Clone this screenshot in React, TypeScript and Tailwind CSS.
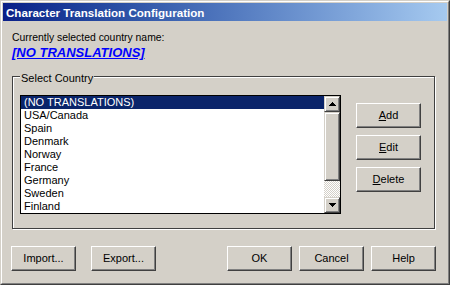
import React from "react";

const raisedBtn =
  "flex items-center justify-center bg-[#d4d0c8] border border-t-white border-l-white border-r-[#404040] border-b-[#404040] shadow-[inset_-1px_-1px_0_#808080] text-[11px] leading-[13px] text-black";

const sbBtn =
  "flex items-center justify-center w-[16px] h-[16px] bg-[#d4d0c8] border border-t-[#d4d0c8] border-l-[#d4d0c8] border-r-[#404040] border-b-[#404040] shadow-[inset_1px_1px_0_#fff,inset_-1px_-1px_0_#808080]";

function Btn({ children, className = "" }: { children: React.ReactNode; className?: string }) {
  return <div className={`${raisedBtn} w-[65px] h-[25px] ${className}`}>{children}</div>;
}

const items = [
  "(NO TRANSLATIONS)",
  "USA/Canada",
  "Spain",
  "Denmark",
  "Norway",
  "France",
  "Germany",
  "Sweden",
  "Finland",
];

export default function App() {
  return (
    <div className="w-[450px] h-[285px] bg-[#d4d0c8] border border-t-[#d4d0c8] border-l-[#d4d0c8] border-r-[#404040] border-b-[#404040] font-['Liberation_Sans',Arial,sans-serif] text-black select-none">
      <div className="w-full h-full border border-t-white border-l-white border-r-[#808080] border-b-[#808080] p-[1px] flex flex-col">
        {/* Title bar */}
        <div className="h-[18px] flex items-center pl-[3px] bg-gradient-to-r from-[#0b1f88] to-[#a6caf0]">
          <span className="text-white font-bold text-[11.6px] leading-[13px]">Character Translation Configuration</span>
        </div>
        {/* Body */}
        <div className="flex flex-col pl-[9px]">
          <div className="mt-[10px] h-[13px] leading-[13px] text-[10.4px]">Currently selected country name:</div>
          <div className="mt-[2px] h-[14px] leading-[14px] text-[13px] font-bold italic underline text-[#0000ff]">
            [NO TRANSLATIONS]
          </div>
          {/* Group box */}
          <div className="relative mt-[16px] w-[423px] h-[153px] border border-[#404040] shadow-[inset_1px_1px_0_#fff,1px_1px_0_#fff]">
            <div className="absolute left-[7px] top-[-5px] px-[1px] bg-[#d4d0c8] text-[11px] leading-[13px]">Select Country</div>
            <div className="flex pl-[7px] pt-[18px]">
              {/* Listbox */}
              <div className="w-[321px] h-[119px] border border-black bg-white flex overflow-hidden">
                <div className="flex-1 flex flex-col">
                  {items.map((it, i) => (
                    <div
                      key={it}
                      className={`h-[13px] shrink-0 leading-[13px] text-[11px] pl-[3px] ${
                        i === 0 ? "bg-[#0a246a] text-white" : "text-black"
                      }`}
                    >
                      {it}
                    </div>
                  ))}
                </div>
                {/* Scrollbar */}
                <div className="w-[16px] flex flex-col">
                  <div className={sbBtn}>
                    <svg width="7" height="4" viewBox="0 0 7 4">
                      <path d="M3 0h1v1h1v1h1v1h1v1H0V3h1V2h1V1h1z" fill="#000" />
                    </svg>
                  </div>
                  <div className="w-[16px] h-[69px] bg-[#d4d0c8] border border-t-[#d4d0c8] border-l-[#d4d0c8] border-r-[#404040] border-b-[#404040] shadow-[inset_1px_1px_0_#fff,inset_-1px_-1px_0_#808080]" />
                  <div className="w-[16px] h-[16px] bg-[repeating-conic-gradient(#d4d0c8_0_25%,#ffffff_0_50%)] bg-[length:2px_2px]" />
                  <div className={sbBtn}>
                    <svg width="7" height="4" viewBox="0 0 7 4">
                      <path d="M0 0h7v1H6v1H5v1H4v1H3V3H2V2H1V1H0z" fill="#000" />
                    </svg>
                  </div>
                </div>
              </div>
              {/* Side buttons */}
              <div className="flex flex-col gap-[7px] ml-[15px] mt-[8px]">
                <Btn>
                  <span>
                    <u>A</u>dd
                  </span>
                </Btn>
                <Btn>
                  <span>
                    <u>E</u>dit
                  </span>
                </Btn>
                <Btn>
                  <span>
                    <u>D</u>elete
                  </span>
                </Btn>
              </div>
            </div>
          </div>
          {/* Bottom buttons */}
          <div className="flex mt-[17px] ml-[-1px]">
            <Btn>Import...</Btn>
            <Btn className="ml-[15px]">Export...</Btn>
            <Btn className="ml-[71px]">OK</Btn>
            <Btn className="ml-[7px]">Cancel</Btn>
            <Btn className="ml-[7px]">Help</Btn>
          </div>
        </div>
      </div>
    </div>
  );
}
